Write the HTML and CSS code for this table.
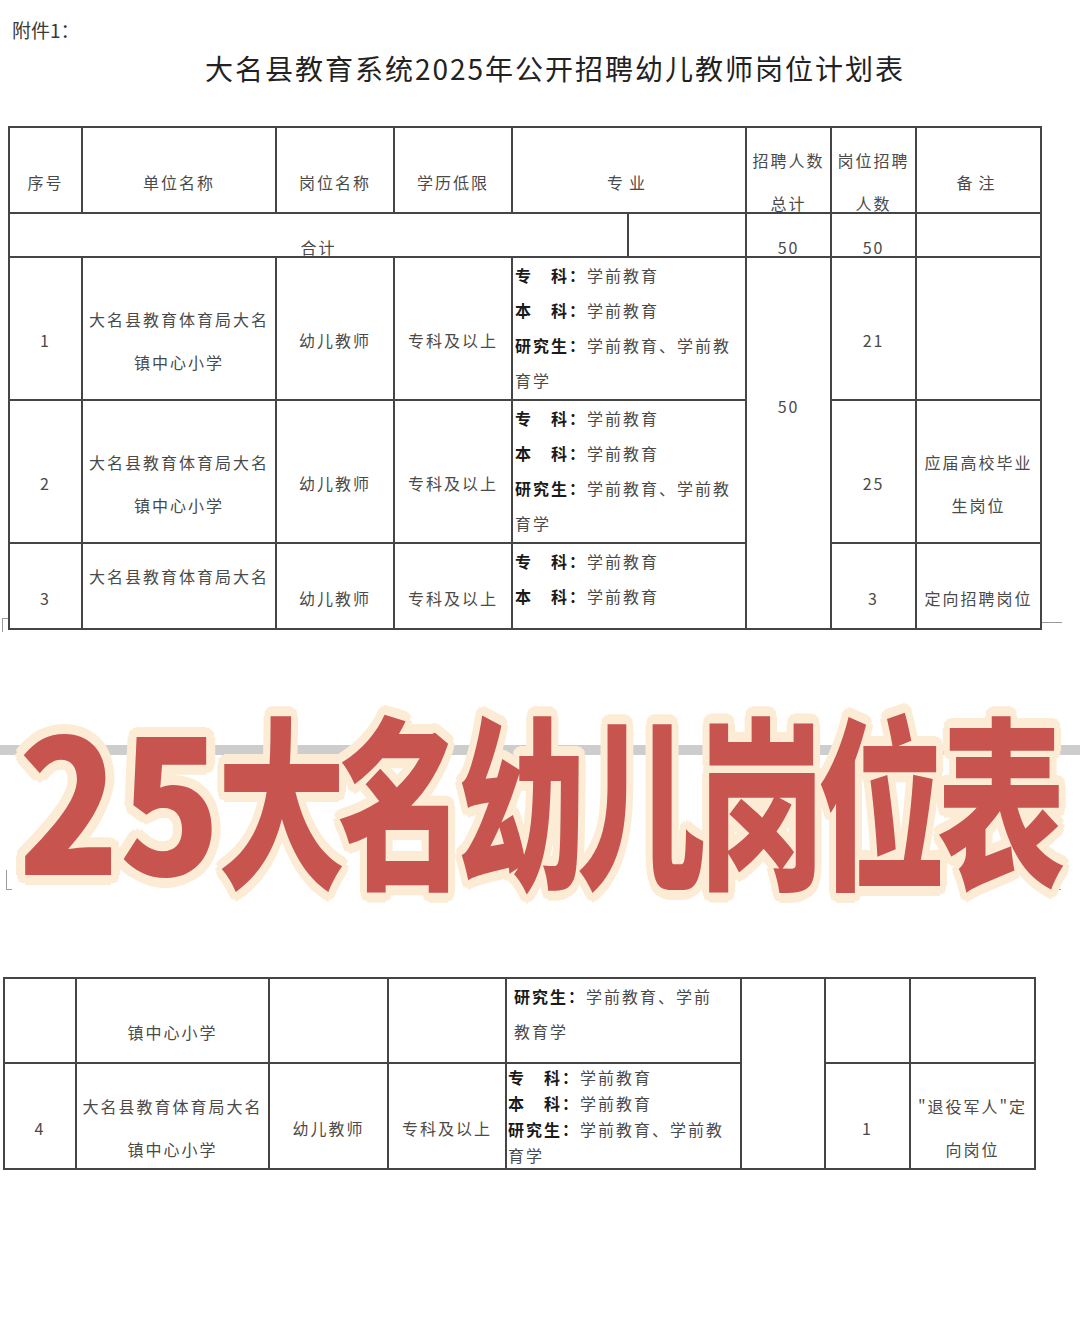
FILE: index.html
```html
<!DOCTYPE html>
<html lang="zh-CN">
<head>
<meta charset="utf-8">
<title>大名县教育系统2025年公开招聘幼儿教师岗位计划表</title>
<link rel="stylesheet" href="styles.css">
</head>
<body>
<div class="page1">
  <div class="note">附件1：</div>
  <h1 class="title">大名县教育系统2025年公开招聘幼儿教师岗位计划表</h1>
  <table class="grid t1">
    <colgroup>
      <col class="w-no"><col class="w-unit"><col class="w-post"><col class="w-edu"><col class="w-mj1"><col class="w-mj2"><col class="w-total"><col class="w-num"><col class="w-rem">
    </colgroup>
    <tr class="r-head">
      <td><div class="c">序号</div></td>
      <td><div class="c">单位名称</div></td>
      <td><div class="c">岗位名称</div></td>
      <td><div class="c">学历低限</div></td>
      <td colspan="2"><div class="c wide">专业</div></td>
      <td><div class="c"><span>招聘人数</span><span>总计</span></div></td>
      <td><div class="c"><span>岗位招聘</span><span>人数</span></div></td>
      <td><div class="c wide">备注</div></td>
    </tr>
    <tr class="r-total">
      <td colspan="5"><div class="c">合计</div></td>
      <td><div class="c"></div></td>
      <td><div class="c">50</div></td>
      <td><div class="c">50</div></td>
      <td><div class="c"></div></td>
    </tr>
    <tr class="r-tall">
      <td><div class="c">1</div></td>
      <td><div class="c"><span>大名县教育体育局大名</span><span>镇中心小学</span></div></td>
      <td><div class="c">幼儿教师</div></td>
      <td><div class="c">专科及以上</div></td>
      <td colspan="2"><div class="zy">
        <div><b>专　科：</b>学前教育</div>
        <div><b>本　科：</b>学前教育</div>
        <div><b>研究生：</b>学前教育、学前教</div>
        <div>育学</div>
      </div></td>
      <td rowspan="3"><div class="big50">50</div></td>
      <td><div class="c">21</div></td>
      <td><div class="c"></div></td>
    </tr>
    <tr class="r-tall">
      <td><div class="c">2</div></td>
      <td><div class="c"><span>大名县教育体育局大名</span><span>镇中心小学</span></div></td>
      <td><div class="c">幼儿教师</div></td>
      <td><div class="c">专科及以上</div></td>
      <td colspan="2"><div class="zy">
        <div><b>专　科：</b>学前教育</div>
        <div><b>本　科：</b>学前教育</div>
        <div><b>研究生：</b>学前教育、学前教</div>
        <div>育学</div>
      </div></td>
      <td><div class="c">25</div></td>
      <td><div class="c"><span>应届高校毕业</span><span>生岗位</span></div></td>
    </tr>
    <tr class="r-last">
      <td><div class="c">3</div></td>
      <td><div class="c"><span>大名县教育体育局大名</span><span>&nbsp;</span></div></td>
      <td><div class="c">幼儿教师</div></td>
      <td><div class="c">专科及以上</div></td>
      <td colspan="2"><div class="zy">
        <div><b>专　科：</b>学前教育</div>
        <div><b>本　科：</b>学前教育</div>
      </div></td>
      <td><div class="c">3</div></td>
      <td><div class="c">定向招聘岗位</div></td>
    </tr>
  </table>
  <span class="mark mark-p1r"></span>
  <span class="mark mark-p1l"></span>
</div>

<div class="banner">
  <span class="band"></span>
  <span class="mark mark-bl"></span>
  <span class="mark mark-br"></span>
  <div class="words"><span class="digits">25</span><span>大名幼儿岗位表</span></div>
</div>

<table class="grid t2">
  <colgroup>
    <col class="v-no"><col class="v-unit"><col class="v-post"><col class="v-edu"><col class="v-mj"><col class="v-total"><col class="v-num"><col class="v-rem">
  </colgroup>
  <tr class="r-a">
    <td><div class="c"></div></td>
    <td><div class="c">镇中心小学</div></td>
    <td><div class="c"></div></td>
    <td><div class="c"></div></td>
    <td><div class="zy zy-a">
      <div><b>研究生：</b>学前教育、学前</div>
      <div>教育学</div>
    </div></td>
    <td rowspan="2"><div class="c"></div></td>
    <td><div class="c"></div></td>
    <td><div class="c"></div></td>
  </tr>
  <tr class="r-b">
    <td><div class="c">4</div></td>
    <td><div class="c"><span>大名县教育体育局大名</span><span>镇中心小学</span></div></td>
    <td><div class="c">幼儿教师</div></td>
    <td><div class="c">专科及以上</div></td>
    <td><div class="zy zy-b">
      <div><b>专　科：</b>学前教育</div>
      <div><b>本　科：</b>学前教育</div>
      <div><b>研究生：</b>学前教育、学前教</div>
      <div>育学</div>
    </div></td>
    <td><div class="c">1</div></td>
    <td><div class="c"><span>"退役军人"定</span><span>向岗位</span></div></td>
  </tr>
</table>
</body>
</html>
```

FILE: styles.css
```css
* { box-sizing: border-box; }

html, body {
  margin: 0;
  padding: 0;
  background: #ffffff;
}

body {
  width: 1080px;
  height: 1325px;
  overflow: hidden;
  font-family: "Noto Sans CJK SC", "Noto Sans", sans-serif;
  color: #4a4a4a;
}

.page1 {
  position: relative;
}

.note {
  height: 48px;
  padding: 18px 0 0 12px;
  font-size: 19px;
  line-height: 24px;
  color: #3a3a3a;
}

.title {
  margin: 0;
  height: 40px;
  padding-left: 30px;
  font-size: 28px;
  line-height: 40px;
  font-weight: 400;
  letter-spacing: 2px;
  text-align: center;
  color: #222222;
}

.grid {
  border-collapse: collapse;
  table-layout: fixed;
}

.grid td {
  border: 2px solid #454545;
  padding: 0;
  vertical-align: top;
  font-size: 16px;
  letter-spacing: 2px;
}

.t1 {
  width: 1032px;
  margin: 38px 0 0 8px;
}

.w-no { width: 73px; }
.w-unit { width: 194px; }
.w-post { width: 118px; }
.w-edu { width: 118px; }
.w-mj1 { width: 116px; }
.w-mj2 { width: 118px; }
.w-total { width: 85px; }
.w-num { width: 85px; }
.w-rem { width: 125px; }

.c {
  display: flex;
  flex-direction: column;
  align-items: center;
  justify-content: center;
  padding-top: 24px;
  line-height: 43px;
  text-align: center;
  white-space: nowrap;
}

.c.wide { letter-spacing: 6px; }

.r-head .c { height: 84px; }
.r-total .c { height: 42px; }
.r-tall .c { height: 141px; }
.r-last .c { height: 84px; }

.zy {
  padding: 0 0 0 2px;
  line-height: 35px;
  text-align: left;
  white-space: nowrap;
}

.zy b {
  font-weight: 700;
  color: #1a1a1a;
}

.big50 {
  padding-top: 136px;
  line-height: 24px;
  text-align: center;
}

.t2 {
  width: 1031px;
  margin: 17px 0 0 3px;
}

.v-no { width: 72px; }
.v-unit { width: 193px; }
.v-post { width: 119px; }
.v-edu { width: 118px; }
.v-mj { width: 235px; }
.v-total { width: 84px; }
.v-num { width: 85px; }
.v-rem { width: 125px; }

.r-a .c { height: 83px; }
.r-b .c { height: 104px; }

.zy-a {
  padding-left: 7px;
  line-height: 35px;
}

.zy-b {
  padding-left: 1px;
  line-height: 26px;
}

/* banner */
.banner {
  position: relative;
  height: 330px;
  display: flex;
  align-items: center;
  justify-content: center;
}

.band {
  position: absolute;
  left: 0;
  right: 0;
  top: 115px;
  height: 10px;
  background: #cdcdcd;
}

.words {
  position: relative;
  display: flex;
  align-items: center;
  font-family: "Noto Sans CJK SC", sans-serif;
  font-weight: 900;
  font-size: 128px;
  line-height: 1;
  letter-spacing: -8px;
  color: #c8544f;
  transform: scaleY(1.45);
  text-shadow:
    7px 0 0 #fcecd6, -7px 0 0 #fcecd6, 0 7px 0 #fcecd6, 0 -7px 0 #fcecd6,
    5px 5px 0 #fcecd6, -5px 5px 0 #fcecd6, 5px -5px 0 #fcecd6, -5px -5px 0 #fcecd6,
    6px 3px 0 #fcecd6, -6px 3px 0 #fcecd6, 6px -3px 0 #fcecd6, -6px -3px 0 #fcecd6,
    3px 6px 0 #fcecd6, -3px 6px 0 #fcecd6, 3px -6px 0 #fcecd6, -3px -6px 0 #fcecd6;
}

.digits {
  display: inline-block;
  width: 195px;
  text-align: center;
  letter-spacing: 0;
  transform: scaleX(1.3);
}

.mark {
  position: absolute;
  border-color: #9a9a9a;
  border-style: solid;
  border-width: 0;
}

.mark-bl {
  left: 6px;
  top: 240px;
  width: 6px;
  height: 20px;
  border-left-width: 1px;
  border-bottom-width: 1px;
}

.mark-br {
  left: 1043px;
  top: 240px;
  width: 18px;
  height: 20px;
  border-left-width: 1px;
  border-bottom-width: 1px;
}

.mark-p1r {
  left: 1042px;
  top: 622px;
  width: 20px;
  height: 1px;
  border-top-width: 1px;
}

.mark-p1l {
  left: 2px;
  top: 618px;
  width: 6px;
  height: 14px;
  border-left-width: 1px;
  border-top-width: 1px;
}
```
